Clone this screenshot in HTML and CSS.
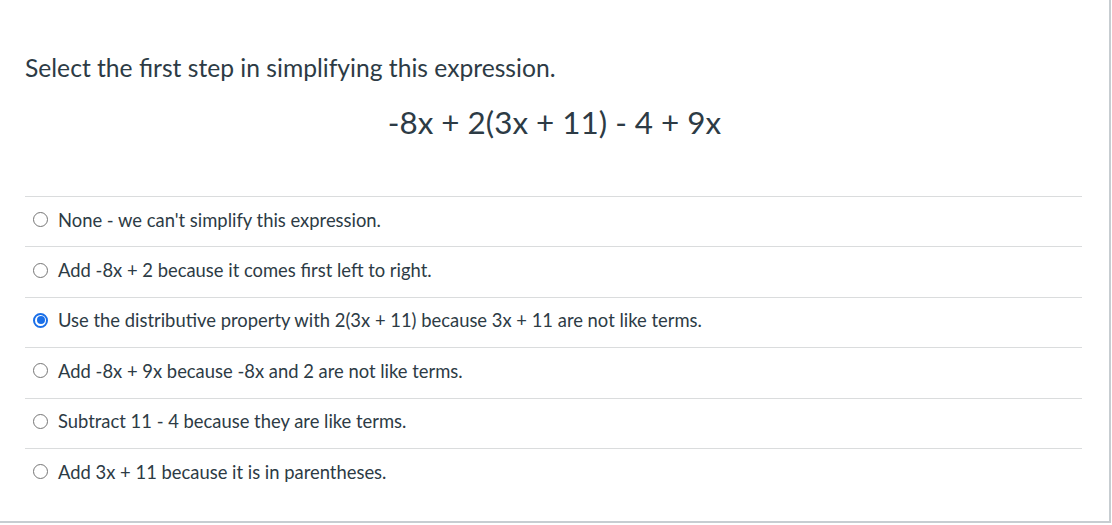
FILE: index.html
```html
<!DOCTYPE html>
<html>
<head>
<meta charset="utf-8">
<link rel="stylesheet" href="styles.css">
</head>
<body>
<div class="quiz">
  <div class="question">
    <p class="prompt">Select the first step in simplifying this expression.</p>
    <p class="expr">-8x + 2(3x + 11) - 4 + 9x</p>
  </div>
  <div class="answers">
    <label class="answer"><span class="radio"></span><span class="label">None - we can't simplify this expression.</span></label>
    <label class="answer"><span class="radio"></span><span class="label">Add -8x + 2 because it comes first left to right.</span></label>
    <label class="answer"><span class="radio checked"></span><span class="label">Use the distributive property with 2(3x + 11) because 3x + 11 are not like terms.</span></label>
    <label class="answer"><span class="radio"></span><span class="label">Add -8x + 9x because -8x and 2 are not like terms.</span></label>
    <label class="answer"><span class="radio"></span><span class="label">Subtract 11 - 4 because they are like terms.</span></label>
    <label class="answer"><span class="radio"></span><span class="label">Add 3x + 11 because it is in parentheses.</span></label>
  </div>
</div>
</body>
</html>
```
FILE: styles.css
```css
html, body {
  margin: 0;
  padding: 0;
  background: #ffffff;
}
body {
  font-family: Lato, "Noto Sans", sans-serif;
  color: #2d3b45;
}
.quiz {
  width: 1111px;
  height: 523px;
  box-sizing: border-box;
  border-right: 2px solid #c7cdd1;
  border-bottom: 2px solid #c7cdd1;
  padding: 50px 27px 0 25px;
}
.question {
  height: 146px;
}
.prompt {
  margin: 0;
  font-size: 24.65px;
  line-height: 36px;
}
.expr {
  margin: 15px 0 0 0;
  text-align: center;
  font-size: 31.4px;
  line-height: 42px;
  padding-left: 2px;
}
.answers {
  display: flex;
  flex-direction: column;
}
.answer {
  display: flex;
  align-items: center;
  height: 50.4px;
  box-sizing: border-box;
  border-top: 1px solid #dadcdd;
  padding: 0 0 4px 8px;
  gap: 10px;
  font-size: 18.4px;
}
.radio {
  width: 13px;
  height: 13px;
  border: 1px solid #767676;
  border-radius: 50%;
  background: #fff;
  flex: none;
  position: relative;
}
.radio.checked {
  border: 2px solid #1a6fe8;
  width: 11px;
  height: 11px;
}
.radio.checked::after {
  content: "";
  position: absolute;
  left: 1.5px;
  top: 1.5px;
  width: 8px;
  height: 8px;
  border-radius: 50%;
  background: #1a6fe8;
}
```
